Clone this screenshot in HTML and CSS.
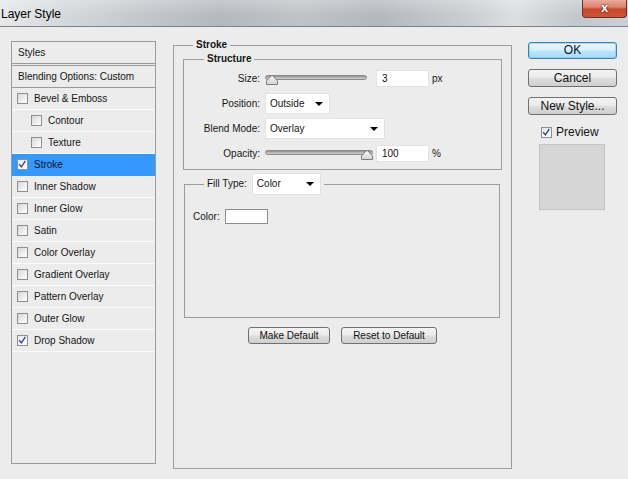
FILE: index.html
```html
<!DOCTYPE html>
<html>
<head>
<meta charset="utf-8">
<title>Layer Style</title>
<link rel="stylesheet" href="styles.css">
</head>
<body>
<div class="titlebar">
  <span class="title">Layer Style</span>
  <div class="close"><span>x</span></div>
</div>
<div class="content">
  <div class="styles-panel">
    <div class="row head">Styles</div>
    <div class="row blend">Blending Options: Custom</div>
    <div class="row item"><span class="cb"></span>Bevel &amp; Emboss</div>
    <div class="row item sub"><span class="cb"></span>Contour</div>
    <div class="row item sub"><span class="cb"></span>Texture</div>
    <div class="row item selected"><span class="cb checked"><svg viewBox="0 0 11 11" width="9" height="9"><path d="M1.5 5.2 L4.2 8.4 L9 1.2" fill="none" stroke="#33449a" stroke-width="1.7"/></svg></span>Stroke</div>
    <div class="row item"><span class="cb"></span>Inner Shadow</div>
    <div class="row item"><span class="cb"></span>Inner Glow</div>
    <div class="row item"><span class="cb"></span>Satin</div>
    <div class="row item"><span class="cb"></span>Color Overlay</div>
    <div class="row item"><span class="cb"></span>Gradient Overlay</div>
    <div class="row item"><span class="cb"></span>Pattern Overlay</div>
    <div class="row item"><span class="cb"></span>Outer Glow</div>
    <div class="row item"><span class="cb checked"><svg viewBox="0 0 11 11" width="9" height="9"><path d="M1.5 5.2 L4.2 8.4 L9 1.2" fill="none" stroke="#33449a" stroke-width="1.7"/></svg></span>Drop Shadow</div>
  </div>

  <fieldset class="group stroke">
    <legend class="bold">Stroke</legend>
    <fieldset class="group structure">
      <legend class="bold">Structure</legend>
      <div class="field">
        <span class="label">Size:</span>
        <div class="slider size-slider">
          <div class="track"></div>
          <svg class="thumb" style="left:1px" viewBox="0 0 12 10" width="12" height="10"><defs><linearGradient id="tg" x1="0" y1="0" x2="0" y2="1"><stop offset="0" stop-color="#fafafa"/><stop offset="1" stop-color="#d4d4d4"/></linearGradient></defs><path d="M0.5 9.5 L0.5 6 L5 1 Q6 0 7 1 L11.5 6 L11.5 9.5 Z" fill="url(#tg)" stroke="#7d7d7d"/></svg>
        </div>
        <div class="input">3</div>
        <span class="unit">px</span>
      </div>
      <div class="field">
        <span class="label">Position:</span>
        <div class="dropdown pos"><span>Outside</span><span class="arrow"></span></div>
      </div>
      <div class="field">
        <span class="label">Blend Mode:</span>
        <div class="dropdown blendmode"><span>Overlay</span><span class="arrow"></span></div>
      </div>
      <div class="field">
        <span class="label">Opacity:</span>
        <div class="slider opacity-slider">
          <div class="track"></div>
          <svg class="thumb" style="left:96px" viewBox="0 0 12 10" width="12" height="10"><path d="M0.5 9.5 L0.5 6 L5 1 Q6 0 7 1 L11.5 6 L11.5 9.5 Z" fill="url(#tg)" stroke="#7d7d7d"/></svg>
        </div>
        <div class="input">100</div>
        <span class="unit">%</span>
      </div>
    </fieldset>

    <fieldset class="group fill">
      <legend class="fill-legend"><span>Fill Type:</span><div class="dropdown filltype"><span>Color</span><span class="arrow"></span></div></legend>
      <div class="color-row"><span>Color:</span><div class="swatch"></div></div>
    </fieldset>

    <div class="defaults">
      <button class="btn make">Make Default</button>
      <button class="btn reset">Reset to Default</button>
    </div>
  </fieldset>

  <div class="actions">
    <button class="btn big ok">OK</button>
    <button class="btn big">Cancel</button>
    <button class="btn big">New Style...</button>
    <div class="preview-row"><span class="cb checked"><svg viewBox="0 0 11 11" width="9" height="9"><path d="M1.5 5.2 L4.2 8.4 L9 1.2" fill="none" stroke="#33449a" stroke-width="1.7"/></svg></span>Preview</div>
    <div class="preview-swatch"></div>
  </div>
</div>
</body>
</html>
```

FILE: styles.css
```css
* { box-sizing: border-box; }
html, body { margin: 0; padding: 0; }
body {
  width: 628px;
  height: 479px;
  overflow: hidden;
  background: #ececec;
  font-family: "Liberation Sans", Arial, sans-serif;
  font-size: 10px;
  color: #151515;
}

.titlebar {
  height: 27px;
  display: flex;
  justify-content: space-between;
  align-items: flex-start;
  border-bottom: 1px solid #7d8287;
  background:
    linear-gradient(180deg, rgba(255,255,255,0.25) 0%, rgba(255,255,255,0) 60%),
    linear-gradient(90deg, #e6e8ea 0%, #d5d8db 10%, #c4c8cc 22%, #b4b9be 35%, #bfc3c7 48%, #b3b8bd 60%, #c9ccd0 74%, #dcdedf 82%, #c3c7cb 92%, #cdd0d3 100%);
}
.title {
  font-size: 12px;
  color: #000;
  padding: 7px 0 0 1px;
}
.close {
  width: 45px;
  height: 18px;
  margin-right: 1px;
  border: 1px solid #7b2a1d;
  border-top: none;
  border-radius: 0 0 4px 4px;
  background: linear-gradient(180deg, #e9aa9a 0%, #dd8670 40%, #c8482c 55%, #c95638 100%);
  display: flex;
  align-items: center;
  justify-content: center;
  color: #fff;
  font-weight: bold;
  font-size: 13px;
  text-shadow: 0 0 2px #5a1a10, 0 0 1px #5a1a10;
}
.close span { margin-top: -2px; }

.content {
  display: flex;
  align-items: flex-start;
  padding: 14px 0 0 11px;
}

/* Styles list */
.styles-panel {
  width: 145px;
  height: 423px;
  border: 1px solid #9a9a9a;
  margin-right: 17px;
  flex: none;
}
.row {
  height: 22px;
  display: flex;
  align-items: center;
  border-bottom: 1px solid #fbfbfb;
  white-space: nowrap;
}
.row.head {
  padding-left: 6px;
  border-bottom: 1px solid #9a9a9a;
}
.row.blend {
  margin-top: 1px;
  height: 23px;
  padding-left: 6px;
  border-top: 1px solid #9a9a9a;
  border-bottom: 1px solid #9a9a9a;
}
.row.item { padding-left: 5px; }
.row.item.sub { padding-left: 19px; }
.row.selected {
  background: #3399ff;
  border-bottom-color: #3399ff;
}

.cb {
  width: 11px;
  height: 11px;
  border: 1px solid #8f8f8f;
  background: linear-gradient(135deg, #d6d6d6 0%, #f4f4f4 70%, #ffffff 100%);
  margin-right: 6px;
  flex: none;
  display: flex;
  align-items: center;
  justify-content: center;
}
.cb.checked { background: linear-gradient(135deg, #e4e4e4 0%, #fbfbfb 70%, #ffffff 100%); }
.cb svg { display: block; }

/* Group boxes */
fieldset.group {
  margin: 0;
  padding: 0;
  border: 1px solid #9c9c9c;
  min-width: 0;
}
legend {
  padding: 0 3px;
  line-height: 12px;
}
.bold { font-weight: bold; }

.stroke {
  width: 339px;
  height: 430px;
  margin-top: -2px !important;
  padding: 0 9px !important;
  flex: none;
}
.stroke > legend { margin-left: 10px; }

.structure {
  margin-top: 2px !important;
  padding: 1px 0 3px 0 !important;
}
.structure > legend { margin-left: 20px; }

.field {
  height: 25px;
  display: flex;
  align-items: center;
}
.label {
  width: 76px;
  text-align: right;
  margin-right: 5px;
  flex: none;
}
.slider {
  position: relative;
  height: 17px;
  flex: none;
}
.size-slider { width: 102px; margin-right: 9px; }
.opacity-slider { width: 108px; margin-right: 3px; }
.track {
  margin-top: 5px;
  height: 5px;
  border-radius: 3px;
  background: linear-gradient(180deg, #8e8e8e 0%, #b5b5b5 50%, #d0d0d0 100%);
  border: 1px solid #8a8a8a;
}
.thumb {
  position: absolute;
  top: 5px;
}
.input {
  width: 53px;
  height: 17px;
  background: #fff;
  border: 1px solid #e3e3e3;
  padding: 0 0 0 5px;
  line-height: 15px;
  color: #111;
  flex: none;
}
.unit { margin-left: 3px; }

.dropdown {
  height: 21px;
  background: #fff;
  border: 1px solid #e2e2e2;
  display: flex;
  align-items: center;
  justify-content: space-between;
  padding: 0 6px 0 4px;
  flex: none;
}
.dropdown.pos { width: 65px; }
.dropdown.blendmode { width: 120px; }
.dropdown.filltype { width: 69px; height: 22px; margin-left: 5px; }
.arrow {
  width: 0;
  height: 0;
  border-left: 4px solid transparent;
  border-right: 4px solid transparent;
  border-top: 4px solid #000;
}

.fill {
  margin: 3px 2px 0 1px !important;
  height: 145px;
  padding: 12px 0 0 8px !important;
}
.fill-legend {
  display: flex;
  align-items: center;
  margin-left: 11px;
  line-height: 22px;
  height: 22px;
}
.color-row {
  display: flex;
  align-items: center;
  height: 19px;
}
.swatch {
  width: 43px;
  height: 15px;
  margin-left: 5px;
  background: #fff;
  border: 1px solid #8e8e8e;
}

.defaults {
  display: flex;
  justify-content: center;
  gap: 11px;
  margin-top: 9px;
}

.btn {
  font-family: "Liberation Sans", Arial, sans-serif;
  font-size: 10px;
  color: #111;
  height: 17px;
  padding: 0;
  border: 1px solid #707070;
  border-radius: 3px;
  background: linear-gradient(180deg, #f3f3f3 0%, #ebebeb 48%, #dddddd 52%, #cfcfcf 100%);
  line-height: 15px;
}
.btn.make { width: 82px; }
.btn.reset { width: 96px; }

.actions {
  margin-left: 16px;
  margin-top: 1px;
  width: 89px;
  display: flex;
  flex-direction: column;
  align-items: flex-start;
  flex: none;
}
.btn.big {
  width: 89px;
  height: 18px;
  font-size: 12px;
  margin-bottom: 10px;
}
.btn.ok {
  height: 17px;
  border-color: #3c7fb1;
  background: linear-gradient(180deg, #eaf6fd 0%, #d9f0fc 48%, #bee6fd 52%, #a7d9f5 100%);
  box-shadow: inset 0 0 0 1px rgba(120, 200, 240, 0.6);
}
.preview-row {
  display: flex;
  align-items: center;
  height: 12px;
  font-size: 12px;
  margin: 1px 0 0 13px;
}
.preview-row .cb { margin-right: 4px; }
.preview-swatch {
  width: 66px;
  height: 66px;
  margin: 6px 0 0 11px;
  background: #d6d6d6;
  border: 1px solid #c3c3c3;
}
```
